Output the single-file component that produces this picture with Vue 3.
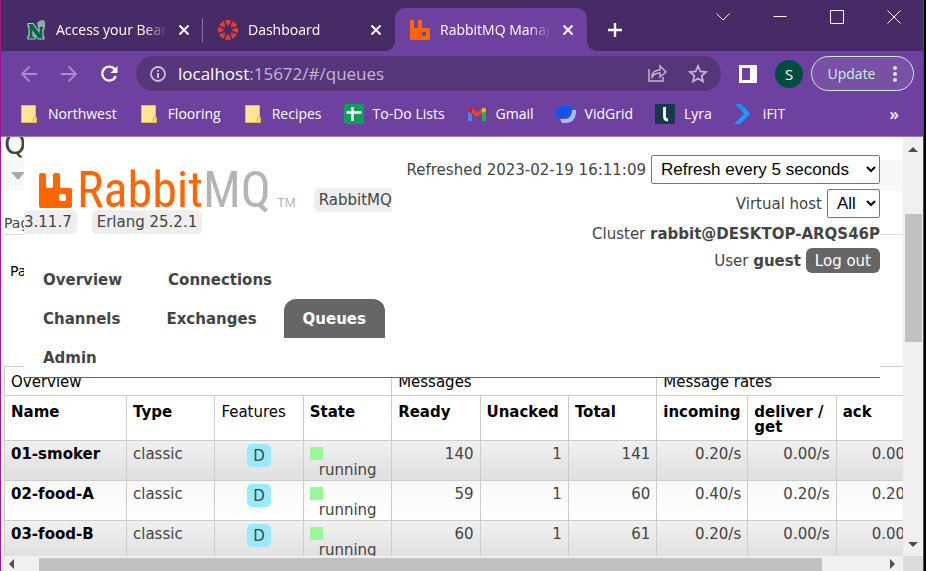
<script setup>
import { ref } from 'vue'

const refresh = ref('Refresh every 5 seconds')
const vhost = ref('All')
const address = ref('localhost:15672/#/queues')

const tabs = [
  { icon: 'bearcat', title: 'Access your Bearcat' },
  { icon: 'canvas', title: 'Dashboard' },
  { icon: 'rabbit', title: 'RabbitMQ Management', active: true },
]

const bookmarks = [
  { icon: 'folder', label: 'Northwest' },
  { icon: 'folder', label: 'Flooring' },
  { icon: 'folder', label: 'Recipes' },
  { icon: 'sheets', label: 'To-Do Lists' },
  { icon: 'gmail', label: 'Gmail' },
  { icon: 'vidgrid', label: 'VidGrid' },
  { icon: 'lyra', label: 'Lyra' },
  { icon: 'ifit', label: 'iFIT' },
]

const nav = ['Overview', 'Connections', 'Channels', 'Exchanges', 'Queues', 'Admin']

const queues = [
  { name: '01-smoker', ready: 140, unacked: 1, total: 141, incoming: '0.20/s', deliver: '0.00/s', ack: '0.00/s' },
  { name: '02-food-A', ready: 59, unacked: 1, total: 60, incoming: '0.40/s', deliver: '0.20/s', ack: '0.20/s' },
  { name: '03-food-B', ready: 60, unacked: 1, total: 61, incoming: '0.20/s', deliver: '0.00/s', ack: '0.00/s' },
]
</script>

<template>
  <div class="window">
    <header class="tabstrip">
      <div v-for="t in tabs" :key="t.title" class="tab" :class="{ active: t.active }">
        <svg v-if="t.icon === 'bearcat'" class="fav" viewBox="0 0 20 20">
          <path d="M11 3q2-3 6-3 3 1 2 4v3h-7z" fill="#8fa5a2" />
          <path d="M2 3.500h5l6 8V6h5v3h-1v8h1v2h-6L7 12v4h2v3H2v-3h1V6.500H2z" fill="#00694a" stroke="#b3c6c1" stroke-width="1.200" />
          <path d="M3 4.500h3.500L14 15V7h2v11h-3L6 9v7.500H4V6z" fill="#00694a" />
        </svg>
        <svg v-else-if="t.icon === 'canvas'" class="fav" viewBox="0 0 20 20">
          <circle cx="10" cy="10" r="8" fill="none" stroke="#e63f2c" stroke-width="4" stroke-dasharray="4.7 1.583" stroke-dashoffset="2.35" />
          <g fill="#e63f2c">
            <circle cx="10" cy="5" r="1" /><circle cx="10" cy="15" r="1" /><circle cx="5" cy="10" r="1" /><circle cx="15" cy="10" r="1" />
            <circle cx="6.5" cy="6.5" r="1" /><circle cx="13.5" cy="6.5" r="1" /><circle cx="6.5" cy="13.5" r="1" /><circle cx="13.5" cy="13.5" r="1" />
          </g>
        </svg>
        <svg v-else class="fav" viewBox="0 0 20 20">
          <path fill="#f60" fill-rule="evenodd" d="M0 1q0-1 1-1h2q1 0 1 1v7h4V1q0-1 1-1h2q1 0 1 1v7h7q1 0 1 1v10q0 1-1 1H1q-1 0-1-1zM12 13v2q0 1 1 1h2q1 0 1-1v-2q0-1-1-1h-2q-1 0-1 1z" />
        </svg>
        <span class="title">{{ t.title }}</span>
        <button class="plain close" :aria-label="'Close ' + t.title">
          <svg viewBox="0 0 12 12" width="12" height="12"><path d="M1.500 1.500l9 9M10.500 1.500l-9 9" stroke="#fff" stroke-width="2" /></svg>
        </button>
      </div>
      <button class="plain newtab" aria-label="New tab">
        <svg viewBox="0 0 16 16" width="16" height="16"><path d="M8 1v14M1 8h14" stroke="#fff" stroke-width="2.400" /></svg>
      </button>
      <div class="controls">
        <button class="plain" aria-label="Search tabs"><svg viewBox="0 0 14 14"><path d="M.5 3.500L7 10l6.500-6.500" /></svg></button>
        <button class="plain" aria-label="Minimize"><svg viewBox="0 0 14 14"><path d="M.5 6.500h13" /></svg></button>
        <button class="plain" aria-label="Maximize"><svg viewBox="0 0 14 14"><path d="M.5.5h13v13H.5z" /></svg></button>
        <button class="plain" aria-label="Close window"><svg viewBox="0 0 14 14"><path d="M.5.5l13 13M13.500.5l-13 13" /></svg></button>
      </div>
    </header>

    <div class="toolbar">
      <button class="plain tool" aria-label="Back">
        <svg viewBox="0 0 18 18"><path d="M17 9H2M9.500 1.500L2 9l7.500 7.500" fill="none" stroke="#ab8bce" stroke-width="1.800" /></svg>
      </button>
      <button class="plain tool" aria-label="Forward">
        <svg viewBox="0 0 18 18"><path d="M1 9h15M8.500 1.500L16 9l-7.500 7.500" fill="none" stroke="#ab8bce" stroke-width="1.800" /></svg>
      </button>
      <button class="plain tool" aria-label="Reload">
        <svg viewBox="0 0 18 18"><path d="M14.800 4.300A7 7 0 1 0 15.800 11" fill="none" stroke="#fff" stroke-width="2.300" /><path d="M17.500 1v7h-7z" fill="#fff" /></svg>
      </button>
      <label class="omnibox">
        <svg class="info" viewBox="0 0 18 18"><circle cx="9" cy="9" r="7" fill="none" stroke="#cbbcd9" stroke-width="1.800" /><path d="M9 8v5M9 5v1.800" stroke="#cbbcd9" stroke-width="2" /></svg>
        <span class="url"><b>localhost</b>{{ address.slice(9) }}</span>
        <svg class="act" viewBox="0 0 20 20" fill="none" stroke="#c4b4d3" stroke-width="1.500"><path d="M1 5v12h14v-4M4 13c0-5 3-7 8-7V2l6 6-6 5V9c-4 0-6 1-8 4z" /></svg>
        <svg class="act" viewBox="0 0 20 20" fill="none" stroke="#c4b4d3" stroke-width="1.800"><path d="M10 2l2.400 5.500 5.600.5-4.300 3.900L15 17.500l-5-3-5 3 1.300-5.600L2 8l5.600-.5z" /></svg>
      </label>
      <button class="plain side" aria-label="Side panel">
        <svg viewBox="0 0 18 18" width="18" height="18"><path fill="#fff" fill-rule="evenodd" d="M0 0h18v18H0zM3 3v12h8V3z" /></svg>
      </button>
      <button class="plain avatar">S</button>
      <button class="plain update">Update
        <svg viewBox="0 0 4 16" width="4" height="16" fill="#cdeee0"><circle cx="2" cy="2" r="2" /><circle cx="2" cy="8" r="2" /><circle cx="2" cy="14" r="2" /></svg>
      </button>
    </div>

    <nav class="bookmarks">
      <a v-for="b in bookmarks" :key="b.label" href="#">
        <svg v-if="b.icon === 'folder'" viewBox="0 0 20 20"><path d="M2.500 1.500h14v11l1 1v5h-15z" fill="#ffe491" stroke="#e5b94e" /><path d="M14.500 18v-4q0-1 1.500-1t1.500 1v4" fill="#ffe491" stroke="#dfa937" /></svg>
        <svg v-else-if="b.icon === 'sheets'" viewBox="0 0 20 20"><rect width="20" height="20" rx="1.500" fill="#0f9d58" /><path d="M8.500 3v14M2.500 8.500h15" stroke="#fff" stroke-width="2.400" /></svg>
        <svg v-else-if="b.icon === 'gmail'" viewBox="0 0 20 20"><path d="M1 6v10q0 1 1 1h3V9z" fill="#4285f4" /><path d="M19 6v10q0 1-1 1h-3V9z" fill="#34a853" /><path d="M15 9V5l1-1q3-1 3 2v1z" fill="#fbbc04" /><path d="M5 9l5 4 5-4V4.500l-5 4-5-4z" fill="#ea4335" /><path d="M1 6q0-3 3-2l1 .8V10L1 7z" fill="#c5221f" /></svg>
        <svg v-else-if="b.icon === 'vidgrid'" viewBox="0 0 20 20"><path d="M16 6h4v3q-1 10-11 10H6l-2-4h5q6 0 7-9z" fill="#a5bdf8" /><path d="M4 2h13l-2 8q-1 4-5 4H4q-5 0-4-4l1-5q1-3 3-3z" fill="#1652f0" /></svg>
        <svg v-else-if="b.icon === 'lyra'" viewBox="0 0 20 20"><path fill="#16394f" d="M0 0h20v20H0z" /><path d="M9.500 3v9.500q0 3.500 3.500 3.500" fill="none" stroke="#fff" stroke-width="2.800" /></svg>
        <svg v-else viewBox="0 0 20 20"><path d="M1 0h6l3 3-1 5z" fill="#1a8cf5" /><path d="M10 3l6 7L6 20H0l10-10-2-3z" fill="#149dff" /></svg>
        <span>{{ b.label }}</span>
      </a>
      <button class="plain more" aria-label="More bookmarks">»</button>
    </nav>

    <div class="viewport">
      <main class="page">
        <h1 class="heading">Queues</h1>
        <div class="section"><svg viewBox="0 0 14 8" width="14" height="8"><path d="M0 0h14L7 8z" fill="#aaa" /></svg></div>
        <h3 class="pagination">Pagination</h3>
        <div class="pager">Page</div>
        <table>
          <colgroup>
            <col class="w-name" /><col class="w" /><col class="w" /><col class="w" /><col class="w" /><col class="w" /><col class="w" /><col class="w-in" /><col class="w" /><col class="w" />
          </colgroup>
          <thead>
            <tr class="groups">
              <th colspan="4">Overview</th>
              <th colspan="3">Messages</th>
              <th colspan="3">Message rates</th>
            </tr>
            <tr class="names">
              <th>Name</th><th>Type</th><th class="light">Features</th><th>State</th>
              <th>Ready</th><th>Unacked</th><th>Total</th>
              <th>incoming</th><th>deliver / get</th><th>ack</th>
            </tr>
          </thead>
          <tbody>
            <tr v-for="q in queues" :key="q.name">
              <td><a class="queue" href="#">{{ q.name }}</a></td>
              <td>classic</td>
              <td class="mid"><abbr class="durable">D</abbr></td>
              <td><i class="dot"></i><span class="state">running</span></td>
              <td class="num">{{ q.ready }}</td>
              <td class="num">{{ q.unacked }}</td>
              <td class="num">{{ q.total }}</td>
              <td class="num">{{ q.incoming }}</td>
              <td class="num">{{ q.deliver }}</td>
              <td class="num">{{ q.ack }}</td>
            </tr>
          </tbody>
        </table>
      </main>

      <div class="masthead">
        <div class="left">
          <div class="brand">
            <span class="logo">
              <svg viewBox="0 0 34 36" width="34" height="36"><path fill="#f60" fill-rule="evenodd" d="M0 2q0-2 2-2h3q2 0 2 2v11q0 2 2 2h3q2 0 2-2V2q0-2 2-2h3q2 0 2 2v11q0 2 2 2h8q2 0 2 2v16q0 2-2 2H2q-2 0-2-2zM20 23v3q0 2 2 2h3q2 0 2-2v-3q0-2-2-2h-3q-2 0-2 2z" /></svg>
              <span class="word">Rabbit<em>MQ</em></span><small>TM</small>
            </span>
            <span class="tag">RabbitMQ 3.11.7</span><span class="tag second">Erlang 25.2.1</span>
          </div>
          <nav class="menu">
            <a v-for="n in nav" :key="n" href="#" :class="{ selected: n === 'Queues' }">{{ n }}</a>
          </nav>
        </div>
        <div class="right">
          <label class="line"><span>Refreshed 2023-02-19 16:11:09</span>
            <select v-model="refresh" class="wide"><option>Refresh every 5 seconds</option></select>
          </label>
          <label class="line"><span>Virtual host</span>
            <select v-model="vhost"><option>All</option></select>
          </label>
          <div class="line short"><span>Cluster <b>rabbit@DESKTOP-ARQS46P</b></span></div>
          <div class="line short"><span>User <b>guest</b></span><button class="logout">Log out</button></div>
        </div>
      </div>

      <div class="vbar">
        <svg viewBox="0 0 10 5" width="10" height="5"><path d="M0 5l5-5 5 5z" fill="#505050" /></svg>
        <div class="vtrack"><div class="vthumb"></div></div>
        <svg viewBox="0 0 10 5" width="10" height="5"><path d="M0 0l5 5 5-5z" fill="#505050" /></svg>
      </div>
      <div class="hbar">
        <svg viewBox="0 0 5 10" width="5" height="10"><path d="M5 0L0 5l5 5z" fill="#505050" /></svg>
        <div class="htrack"><div class="hthumb"></div></div>
        <svg viewBox="0 0 5 10" width="5" height="10"><path d="M0 0l5 5-5 5z" fill="#505050" /></svg>
      </div>
      <div class="corner"></div>
    </div>
  </div>
</template>

<style>
body { margin: 0; background: #000; }
</style>

<style scoped>
* { box-sizing: border-box; }
.window {
  height: 100vh;
  margin-right: 2px;
  display: flex;
  flex-direction: column;
  overflow: hidden;
  border: 0 solid #a0188f;
  border-width: 0 1px;
  background: #6e41a0;
  font-family: "Open Sans", "Noto Sans", sans-serif;
  font-size: 14px;
  color: #fff;
}
svg { flex: none; display: block; }
a { color: inherit; text-decoration: none; }
.plain { border: 0; padding: 0; background: none; color: inherit; font: inherit; display: flex; align-items: center; justify-content: center; }

.tabstrip { display: flex; height: 51px; padding: 8px 0 0 10px; background: #472b66; flex: none; }
.tab { position: relative; display: flex; align-items: center; width: 192px; padding: 0 12px 0 15px; }
.tab:first-child::after { content: ""; position: absolute; right: 0; top: 10px; height: 24px; width: 1px; background: #8a76a0; }
.tab.active { background: #6e41a0; border-radius: 10px 10px 0 0; }
.tab.active::before, .tab.active::after { content: ""; position: absolute; bottom: 0; width: 10px; height: 10px; }
.tab.active::before { left: -10px; background: radial-gradient(circle at 0 0, transparent 10px, #6e41a0 10px); }
.tab.active::after { right: -10px; background: radial-gradient(circle at 100% 0, transparent 10px, #6e41a0 10px); }
.fav { width: 20px; height: 20px; }
.title { flex: 1; min-width: 0; margin: 0 8px 0 10px; overflow: hidden; white-space: nowrap; mask-image: linear-gradient(90deg, #000 78%, transparent 98%); }
.close { width: 14px; height: 20px; }
.newtab { width: 28px; margin-left: 14px; }
.controls { display: flex; align-items: flex-start; gap: 43px; margin-left: auto; padding: 2px 22px 0 0; }
.controls svg { width: 14px; height: 14px; fill: none; stroke: #fff; }

.toolbar { display: flex; align-items: center; height: 45px; padding: 0 9px 0 19px; flex: none; }
.tool { width: 18px; margin-right: 22px; }
.tool svg { width: 18px; height: 18px; }
.tool:nth-child(3) { margin-right: 18px; }
.omnibox { flex: 1; display: flex; align-items: center; height: 35px; padding: 0 13px; border-radius: 18px; background: #56367a; }
.info { width: 18px; height: 18px; }
.url { flex: 1; margin-left: 11px; font-size: 17px; color: #c6b5d8; }
.url b { font-weight: 400; color: #fff; }
.act { width: 20px; height: 20px; margin-left: 20px; }
.side { margin-left: 18px; }
.avatar { width: 28px; height: 28px; margin: 0 8px 0 18px; border-radius: 50%; background: #004d40; font-size: 15px; }
.update { width: 103px; height: 35px; gap: 18px; border: 1px solid #cdeee0; border-radius: 18px; background: #7851a7; color: #cdeee0; }

.bookmarks { display: flex; align-items: center; gap: 22px; height: 41px; padding: 0 24px 5px 18px; flex: none; border-bottom: 1px solid #9b76c4; white-space: nowrap; }
.bookmarks a { display: flex; align-items: center; gap: 9px; line-height: 18px; }
.bookmarks svg { width: 20px; height: 20px; }
.more { margin-left: auto; font-size: 17px; font-weight: 600; line-height: 18px; }

.viewport {
  position: relative;
  flex: 1;
  min-height: 0;
  display: grid;
  grid-template: minmax(0, 1fr) 15px / minmax(0, 1fr) 20px;
  background: #fff;
  color: #444;
  font-family: "DejaVu Sans", sans-serif;
  font-size: 15px;
}
.page { overflow: hidden; padding-left: 3px; }
.heading { margin: 0; height: 23px; font-size: 28px; font-weight: 400; line-height: 16px; }
.section { height: 31px; padding: 12px 7px; background: #f8f8f8; }
.pagination { margin: 0; height: 44px; padding-top: 22px; font-size: 14px; font-weight: 400; line-height: 20px; border-bottom: 1px solid #ddd; }
.pager { height: 131px; padding: 26px 6px; font-size: 14px; line-height: 20px; color: #000; }

table { width: 921px; table-layout: fixed; border-collapse: collapse; }
.w-name { width: 122px; }
.w-in { width: 91px; }
th, td { padding: 5px 6px 2px; border: 1px solid #ccc; text-align: left; vertical-align: top; line-height: 16px; }
th { color: #000; font-weight: 700; }
.groups th { height: 29px; font-weight: 400; padding-top: 7px; }
.names th { height: 45px; padding: 9px 6px 5px; line-height: 15px; }
.names .light { font-weight: 400; }
tbody tr { height: 40px; background: linear-gradient(#f8f8f8, #fff); }
tbody tr:nth-child(odd) { background: linear-gradient(#f0f0f0, #dfdfdf); }
.queue { color: #000; font-weight: 700; }
.num { text-align: right; }
.mid { text-align: center; padding-top: 3px; padding-bottom: 0; }
.durable { display: inline-block; padding: 4px 6px 3px; border-radius: 5px; background: #98ebff; }
.dot { display: block; width: 13px; height: 13px; margin: 1px 0 2px; background: #98f898; }
.state { display: block; padding-left: 9px; }

.masthead {
  position: absolute;
  left: 23px;
  right: 43px;
  top: 0;
  display: flex;
  justify-content: space-between;
  height: 241px;
  background: #fff;
  border-bottom: 1px solid #666;
}
.left { width: 368px; }
.brand { height: 123px; padding-top: 32px; line-height: 18px; }
.logo { display: inline-flex; align-items: flex-end; height: 44px; margin: 0 18px 0 15px; vertical-align: -4px; }
.logo svg { margin-bottom: 4px; }
.word { margin: 0 6px 0 4px; font-family: "Liberation Sans Narrow", "Roboto Condensed", "Open Sans Condensed", sans-serif; font-size: 50px; line-height: 46px; color: #f60; }
.word em { font-style: normal; color: #b4b4b4; }
.logo small { font-family: "Liberation Sans", sans-serif; font-size: 13px; line-height: 20px; color: #b4b4b4; }
.tag { padding: 3px 5px; border-radius: 5px; background: #eee; }
.second { margin-left: 15px; }
.menu { display: flex; flex-wrap: wrap; column-gap: 8px; }
.menu a { height: 39px; padding: 0 19px; line-height: 40px; font-weight: 700; border-radius: 12px 12px 0 0; }
.menu .selected { background: #666; color: #fff; }
.right { display: flex; flex-direction: column; align-items: flex-end; padding-top: 18px; white-space: nowrap; }
.line { display: flex; align-items: center; gap: 5px; height: 29px; margin-bottom: 5px; }
.line + .line { margin-bottom: 2px; }
.line.short { height: 27px; margin: 0; }
.line select { height: 29px; padding: 0 7px 0 5px; border: 1px solid #767676; border-radius: 2px; background: #fff; color: #000; font-family: "Liberation Sans", sans-serif; font-size: 17px; }
.line .wide { min-width: 229px; }
.logout { height: 25px; padding: 0 9px; border: 0; border-radius: 6px; background: #666; color: #fff; font-family: inherit; font-size: 15px; }

.vbar { display: flex; flex-direction: column; align-items: center; padding: 10px 0 9px; background: #f0f0f0; }
.vtrack { flex: 1; width: 17px; padding-top: 62px; }
.vthumb { height: 39%; background: #c1c1c1; }
.hbar { display: flex; align-items: center; padding: 0 8px; background: #f0f0f0; }
.htrack { flex: 1; align-self: flex-end; height: 13px; padding-left: 25px; }
.hthumb { width: 92%; height: 100%; background: #c1c1c1; }
.corner { background: #dcdcdc; }
</style>
